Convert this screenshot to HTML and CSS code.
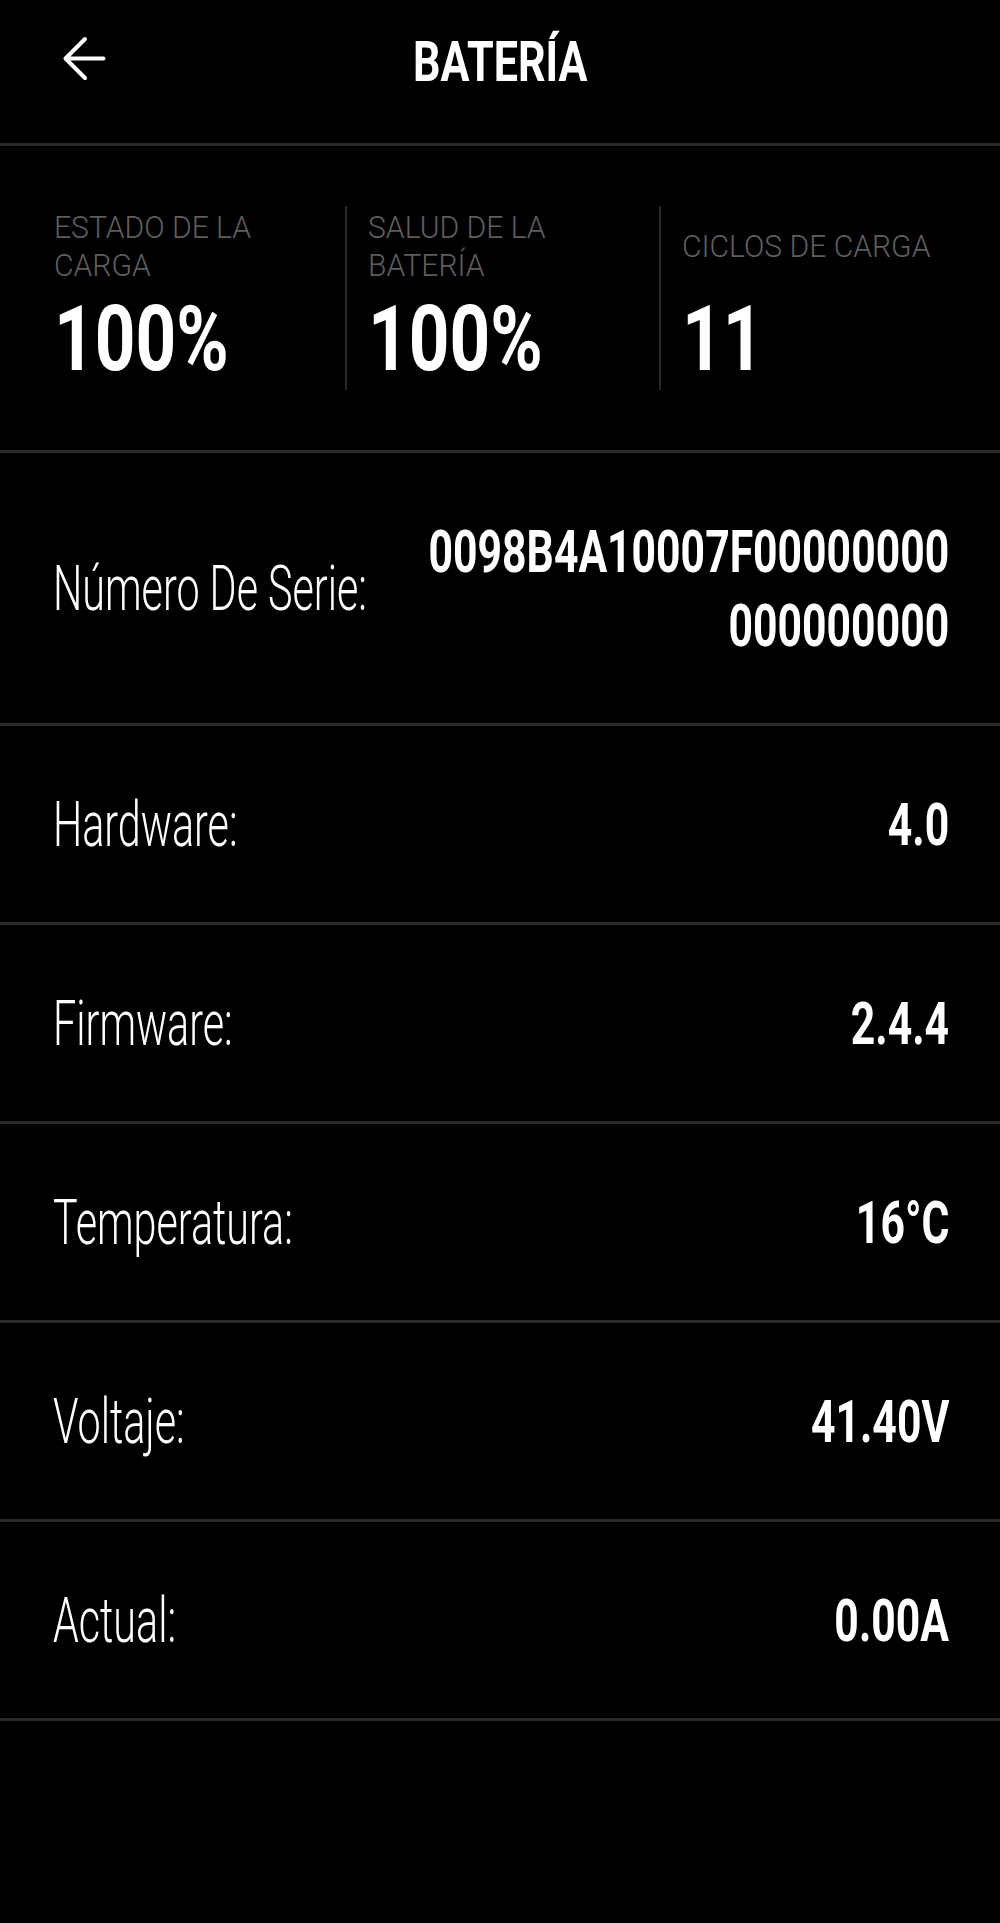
FILE: index.html
```html
<!DOCTYPE html>
<html lang="es">
<head>
    <meta charset="UTF-8">
    <meta name="viewport" content="width=device-width, initial-scale=1.0">
    <title>Batería</title>
    <link rel="stylesheet" href="styles.css">
</head>
<body>
    <header class="topbar">
        <svg class="back" viewBox="0 0 41 41" width="41" height="41">
            <path d="M21 1 L1.5 20.5 L21 40 M1.5 20.5 H39.5" fill="none" stroke="#fff" stroke-width="4" stroke-linecap="round" stroke-linejoin="round"/>
        </svg>
        <h1 class="title">BATERÍA</h1>
        <div></div>
    </header>

    <section class="stats">
        <div class="stat">
            <div class="stat-label">ESTADO DE LA CARGA</div>
            <div class="stat-value">100%</div>
        </div>
        <div class="stat">
            <div class="stat-label">SALUD DE LA BATERÍA</div>
            <div class="stat-value">100%</div>
        </div>
        <div class="stat">
            <div class="stat-label">CICLOS DE CARGA</div>
            <div class="stat-value">11</div>
        </div>
    </section>

    <div class="row row-tall">
        <div class="row-label">Número De Serie:</div>
        <div class="row-value">0098B4A10007F00000000<br>000000000</div>
    </div>
    <div class="row">
        <div class="row-label">Hardware:</div>
        <div class="row-value">4.0</div>
    </div>
    <div class="row">
        <div class="row-label">Firmware:</div>
        <div class="row-value">2.4.4</div>
    </div>
    <div class="row">
        <div class="row-label">Temperatura:</div>
        <div class="row-value">16°C</div>
    </div>
    <div class="row">
        <div class="row-label">Voltaje:</div>
        <div class="row-value">41.40V</div>
    </div>
    <div class="row">
        <div class="row-label">Actual:</div>
        <div class="row-value">0.00A</div>
    </div>
</body>
</html>
```

FILE: styles.css
```css
html, body {
    background: #000;
}
body {
    margin: 0;
    min-height: 1923px;
    font-family: Roboto, "Liberation Sans", Arial, sans-serif;
    color: #fff;
}

/* header */
.topbar {
    display: grid;
    grid-template-columns: 1fr auto 1fr;
    align-items: center;
    height: 120px;
    padding-bottom: 23px;
    border-bottom: 3px solid #2a2a2a;
}
.back {
    display: block;
    margin: -4px 0 0 64px;
    overflow: visible;
}
.title {
    margin: 4px 0 0;
    font-size: 56px;
    font-weight: 700;
    line-height: 1;
    transform: scaleX(0.77);
}

/* top numbers */
.stats {
    display: flex;
    padding: 60px 27px 60px 31px;
    border-bottom: 3px solid #2a2a2a;
}
.stat {
    flex: 1;
    height: 184px;
    padding: 2px 0 0 23px;
    box-sizing: border-box;
}
.stat + .stat {
    border-left: 2px solid #2a2a2a;
    padding-left: 21px;
}
.stat-label {
    display: flex;
    align-items: center;
    height: 76px;
    font-size: 32px;
    font-weight: 300;
    line-height: 38px;
    color: #5e5e5e;
    transform: scaleX(0.94);
    transform-origin: left;
}
.stat-value {
    margin-top: 10px;
    font-size: 91px;
    font-weight: 700;
    line-height: 1;
    transform: scaleX(0.78);
    transform-origin: left;
}

/* info rows */
.row {
    display: flex;
    align-items: center;
    padding: 62px 51px 60px 53px;
    border-bottom: 3px solid #2a2a2a;
}
.row-label {
    flex: 1;
    min-width: 0;
    font-size: 63px;
    font-weight: 300;
    line-height: 74px;
    white-space: nowrap;
    transform: scaleX(0.655);
    transform-origin: left;
}
.row-value {
    flex: none;
    font-size: 60px;
    font-weight: 700;
    line-height: 74px;
    text-align: right;
    white-space: nowrap;
    transform: scaleX(0.712);
    transform-origin: right;
}
```
